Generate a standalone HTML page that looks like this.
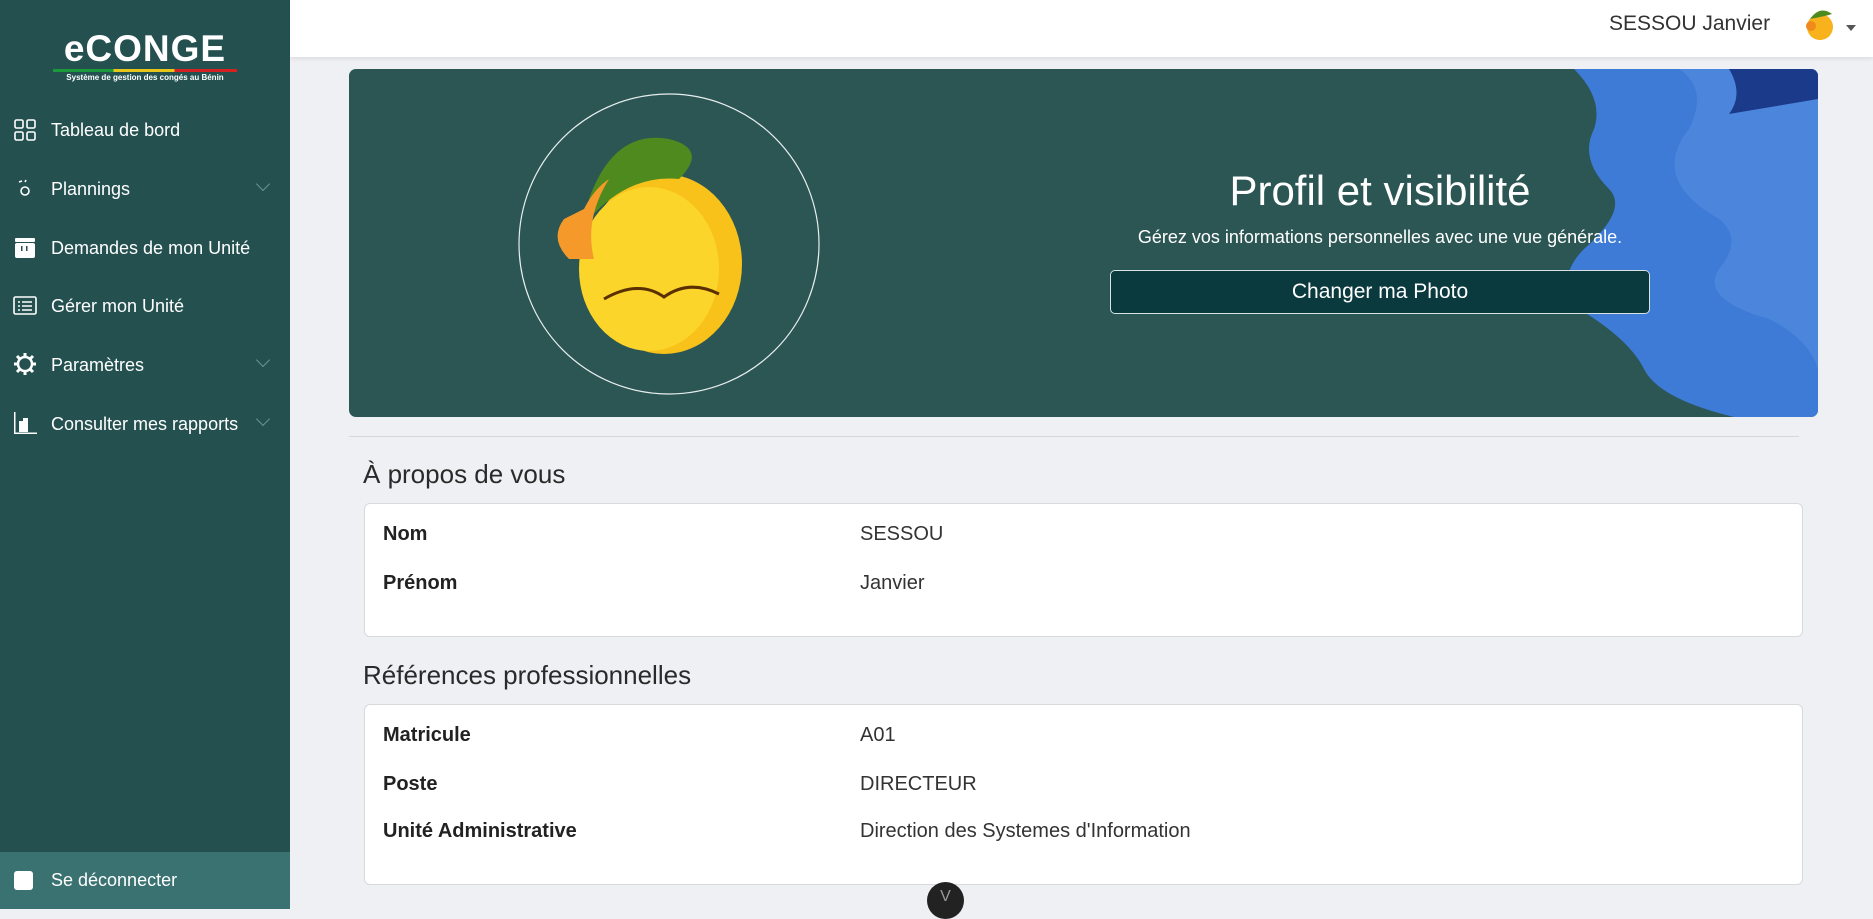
<!DOCTYPE html>
<html><head><meta charset="utf-8"><style>
*{box-sizing:border-box;margin:0;padding:0}
body{width:1873px;height:909px;overflow:hidden;font-family:"Liberation Sans",sans-serif;background:#eff0f4;position:relative}
.sb{position:absolute;left:0;top:0;width:290px;height:909px;background:#245150;color:#fff}
.logo{position:absolute;left:0;width:290px;top:29px;text-align:center}
.logo b{font-size:37px;font-weight:900;letter-spacing:1px;display:block;line-height:40px}
.flag{width:184px;height:3px;margin:0 auto;background:linear-gradient(90deg,#1a9a3a 33%,#e8c51a 33% 66%,#d42020 66%)}
.logo small{font-size:8px;font-weight:bold;display:block;margin-top:1px}
.nav{position:absolute;left:0;font-size:18px;width:290px}
.nav div{position:absolute;left:51px;top:0}
.ic{position:absolute;left:13px;width:24px;height:24px}
.chev{position:absolute;left:258px;width:10px;height:10px;border-right:1.5px solid #6f9290;border-bottom:1.5px solid #6f9290;transform:rotate(45deg)}
.out{position:absolute;left:0;top:852px;width:290px;height:57px;background:#3a7271}
.top{position:absolute;left:290px;top:0;right:0;height:57px;background:#fff;box-shadow:0 2px 4px rgba(0,0,0,.08)}
.banner{position:absolute;left:349px;top:69px;width:1469px;height:348px;border-radius:7px;background:#2b5654;overflow:hidden}
.card{position:absolute;left:364px;width:1439px;background:#fff;border:1px solid #d7d9dd;border-radius:6px}
.lbl{position:absolute;left:383px;font-size:20px;color:#222;font-weight:bold}
.val{position:absolute;left:860px;font-size:20px;color:#333}
h3{position:absolute;left:363px;font-size:26px;font-weight:normal;color:#2a2a2a}
</style></head><body>
<div class="sb">
 <div class="logo"><b>eCONGE</b><div class="flag"></div><small>Système de gestion des congés au Bénin</small></div>
 <div class="nav">
  <svg class="ic" style="top:118px" viewBox="0 0 24 24" fill="none" stroke="#fff" stroke-width="1.6"><rect x="2" y="2" width="8" height="8" rx="1.5"/><rect x="14" y="2" width="8" height="8" rx="1.5"/><rect x="2" y="14" width="8" height="8" rx="1.5"/><rect x="14" y="14" width="8" height="8" rx="1.5"/></svg>
  <div style="top:120px">Tableau de bord</div>
  <svg class="ic" style="top:176px" viewBox="0 0 24 24" fill="none" stroke="#fff" stroke-width="1.6"><circle cx="12" cy="15" r="4"/><path d="M6 6l3 -1M12 6l1-2"/></svg>
  <div style="top:179px">Plannings</div><span class="chev" style="top:179px"></span>
  <svg class="ic" style="top:236px" viewBox="0 0 24 24" fill="#fff"><rect x="2" y="2" width="20" height="4" rx="1"/><rect x="2" y="7" width="20" height="15" rx="2"/><rect x="8" y="10" width="1.5" height="5" fill="#245150"/><rect x="13" y="10" width="1.5" height="5" fill="#245150"/></svg>
  <div style="top:238px">Demandes de mon Unité</div>
  <svg class="ic" style="top:294px" viewBox="0 0 24 24" fill="none" stroke="#fff" stroke-width="1.6"><rect x="1" y="3" width="22" height="17" rx="1.5"/><path d="M5 8h2M9 8h10M5 12h2M9 12h10M5 16h2M9 16h10"/></svg>
  <div style="top:296px">Gérer mon Unité</div>
  <svg class="ic" style="top:352px" viewBox="0 0 24 24" fill="none" stroke="#fff" stroke-width="2.5"><circle cx="12" cy="12" r="7"/><path d="M12 1v4M12 19v4M1 12h4M19 12h4M4 4l3 3M17 17l3 3M20 4l-3 3M4 20l3-3" stroke-width="3"/></svg>
  <div style="top:355px">Paramètres</div><span class="chev" style="top:355px"></span>
  <svg class="ic" style="top:411px" viewBox="0 0 24 24" fill="#fff"><path d="M1 1v22h23v-1.5H2.5V1z"/><rect x="6" y="10" width="4" height="11"/><rect x="10" y="7" width="5" height="14"/></svg>
  <div style="top:414px">Consulter mes rapports</div><span class="chev" style="top:414px"></span>
 </div>
 <div class="out"><div style="position:absolute;left:14px;top:19px;width:19px;height:19px;background:#fff;border-radius:3px"></div><div style="position:absolute;left:51px;top:18px;font-size:18px">Se déconnecter</div></div>
</div>
<div class="top">
 <div style="position:absolute;left:1319px;top:12px;font-size:21px;color:#333">SESSOU Janvier</div>
 <svg style="position:absolute;left:1513px;top:6px" width="34" height="36" viewBox="0 0 34 36"><circle cx="17" cy="21" r="13" fill="#f7b21c"/><path d="M7 13q10-14 22-5q-6 2-22 5z" fill="#4f8a1e"/><circle cx="8" cy="20" r="5" fill="#f08a1a"/></svg>
 <div style="position:absolute;left:1556px;top:25px;border:5px solid transparent;border-top:6px solid #555"></div>
</div>
<div class="banner">
 <svg style="position:absolute;left:0;top:0" width="1469" height="348">
  <path d="M1225 0 Q1255 30 1245 60 Q1230 90 1260 120 Q1280 140 1235 180 Q1205 210 1230 240 Q1280 270 1295 300 Q1310 330 1385 348 H1469 V0 Z" fill="#3d7bd6"/>
  <path d="M1330 0 Q1360 20 1340 60 Q1300 110 1370 150 Q1395 170 1370 200 Q1350 230 1420 250 Q1460 270 1469 300 V0 Z" fill="#4b86dc"/>
  <path d="M1380 0 Q1395 25 1380 45 L1469 30 V0Z" fill="#1b3a8a"/>
  <circle cx="320" cy="175" r="150" fill="none" stroke="#e8eeee" stroke-width="1.2"/>
  <ellipse cx="315" cy="195" rx="78" ry="90" fill="#f8c21a"/>
  <ellipse cx="300" cy="200" rx="70" ry="82" fill="#fbd52a"/>
  <path d="M240 130 Q265 60 320 70 Q360 80 330 110 Q280 105 240 150z" fill="#4f8a1e"/>
  <path d="M215 150 Q200 170 220 190 L245 190 Q235 150 260 110 Q245 120 235 140z" fill="#f59a2a"/>
  <path d="M255 230 Q290 210 315 228 Q340 210 370 225" stroke="#5a3000" stroke-width="3" fill="none"/>
 </svg>
 <div style="position:absolute;left:741px;width:580px;top:98px;text-align:center;color:#fff;font-size:42px">Profil et visibilité</div>
 <div style="position:absolute;left:691px;width:680px;top:158px;text-align:center;color:#fff;font-size:18px">Gérez vos informations personnelles avec une vue générale.</div>
 <div style="position:absolute;left:761px;top:201px;width:540px;height:44px;border:1px solid #d8e3e3;border-radius:5px;background:#0b3a3e;color:#fff;font-size:21px;text-align:center;line-height:42px">Changer ma Photo</div>
</div>
<div style="position:absolute;left:349px;top:436px;width:1450px;height:1px;background:#d5d7dc"></div>
<h3 style="top:459px">À propos de vous</h3>
<div class="card" style="top:503px;height:134px"></div>
<div class="lbl" style="top:523px">Nom</div><div class="val" style="top:523px">SESSOU</div>
<div class="lbl" style="top:572px">Prénom</div><div class="val" style="top:572px">Janvier</div>
<h3 style="top:660px">Références professionnelles</h3>
<div class="card" style="top:704px;height:181px"></div>
<div class="lbl" style="top:724px">Matricule</div><div class="val" style="top:724px">A01</div>
<div class="lbl" style="top:773px">Poste</div><div class="val" style="top:773px">DIRECTEUR</div>
<div class="lbl" style="top:820px">Unité Administrative</div><div class="val" style="top:820px">Direction des Systemes d'Information</div>
<div style="position:absolute;left:927px;top:882px;width:37px;height:37px;border-radius:50%;background:#222;color:#999;text-align:center;font-size:16px;line-height:30px">V</div>
</body></html>
